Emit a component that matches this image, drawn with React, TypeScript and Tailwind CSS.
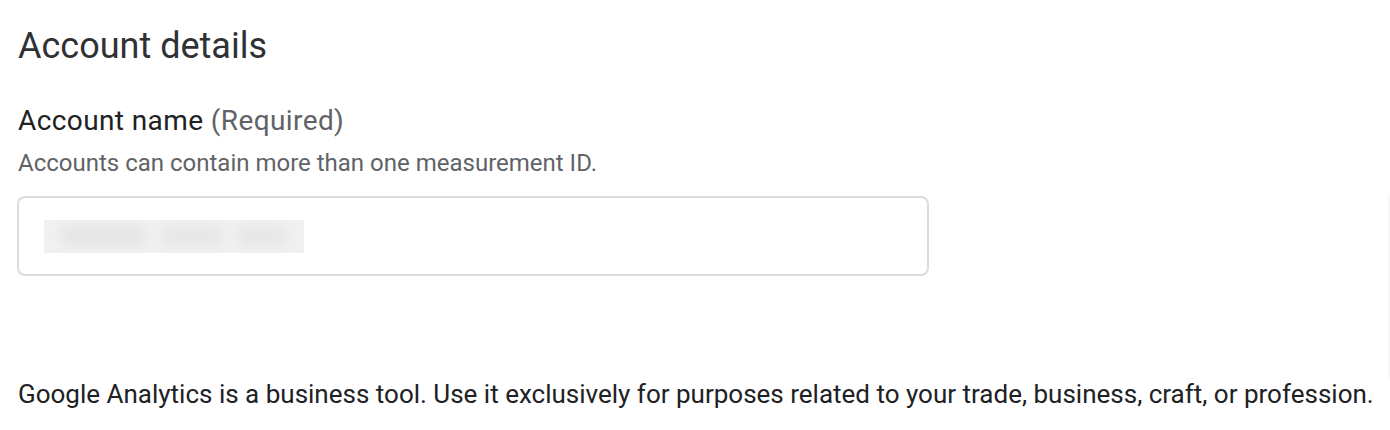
export default function App() {
  return (
    <div className="relative min-h-[430px] w-[1390px] bg-white font-['Roboto',sans-serif] text-[#202124]">
      <div className="px-[17px] pt-[24px]">
        <h1 className="pl-px text-[36px] leading-[44px] font-normal text-[#303134]">Account details</h1>

        <div className="mt-[35px] pl-px">
          <label className="block text-[28px] leading-[36px] tracking-[0.4px]">
            Account name <span className="text-[#5f6368]">(Required)</span>
          </label>
          <p className="mt-[8px] text-[24px] leading-[32px] text-[#5f6368]">
            Accounts can contain more than one measurement ID.
          </p>
        </div>

        {/* input with blurred value */}
        <div className="mt-[17px] flex h-[80px] w-[912px] items-center rounded-[8px] border-2 border-[#dadce0] px-[25px]">
          <div className="flex h-[33px] w-[260px] items-center gap-[14px] bg-[#f0f0f0] px-[16px]">
            <div className="h-[20px] w-[92px] rounded-full bg-[#e6e6e6] blur-[5px]" />
            <div className="h-[20px] w-[66px] rounded-full bg-[#e7e7e7] blur-[5px]" />
            <div className="h-[20px] w-[54px] rounded-full bg-[#e7e7e7] blur-[5px]" />
          </div>
        </div>

        <p className="mt-[100px] pl-px text-[26px] leading-[36px] whitespace-nowrap">
          Google Analytics is a business tool. Use it exclusively for purposes related to your trade, business, craft, or profession.
        </p>
      </div>
      <div className="absolute right-0 top-[195px] h-[185px] w-[2px] bg-[#f7f7f7]" />
    </div>
  )
}
